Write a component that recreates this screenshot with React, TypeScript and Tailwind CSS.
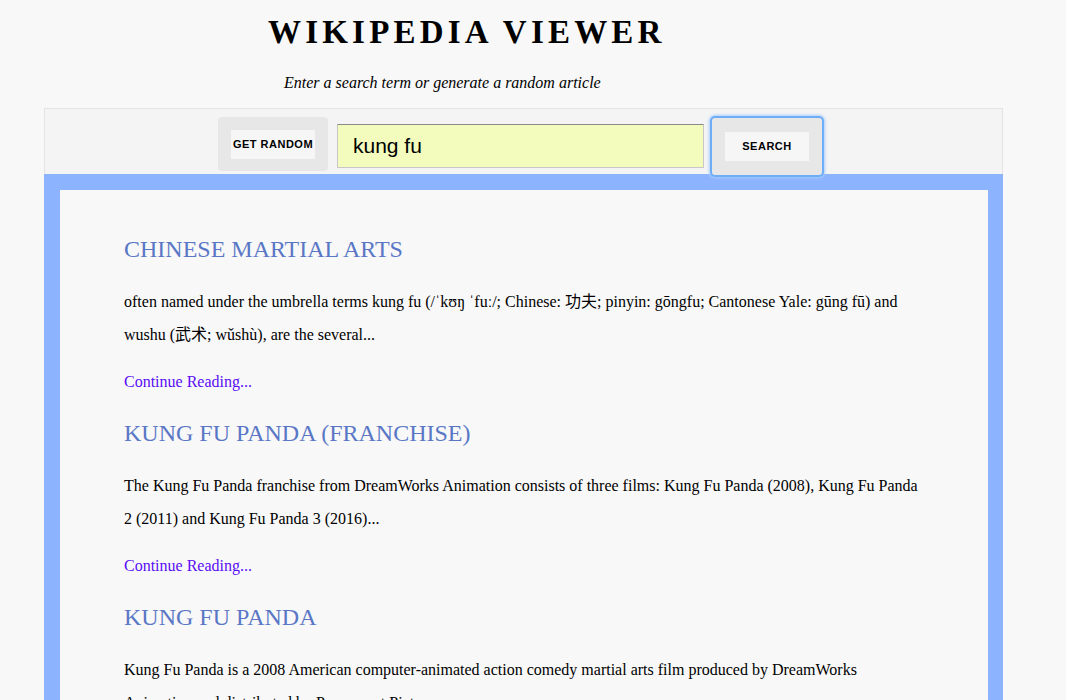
const results = [
  {
    title: "Chinese martial arts",
    extract: (
      <>
        often named under the umbrella terms kung fu (/ˈkʊŋ ˈfuː/; Chinese: 功夫; pinyin: gōngfu; Cantonese Yale: gūng fū) and
        wushu (武术; wǔshù), are the several...
      </>
    ),
  },
  {
    title: "Kung Fu Panda (franchise)",
    extract: (
      <>
        The Kung Fu Panda franchise from DreamWorks Animation consists of three films: Kung Fu Panda (2008), Kung Fu Panda 2 (2011) and Kung Fu Panda 3 (2016)...
      </>
    ),
  },
  {
    title: "Kung Fu Panda",
    extract: (
      <>
        Kung Fu Panda is a 2008 American computer-animated action comedy martial arts film produced by DreamWorks Animation and distributed by Paramount Pictures...
      </>
    ),
  },
];

function Result({ title, extract }: { title: string; extract: React.ReactNode }) {
  return (
    <article className="mb-[21px]">
      <h2 className="text-[24px] leading-[28px] uppercase text-[#5a77c6]">{title}</h2>
      <p className="mt-[22px] text-[16px] leading-[33px] text-black">{extract}</p>
      <p className="mt-[14px] text-[16px] leading-[33px]">
        <a href="#" className="text-[#5a0cf6]">
          Continue Reading...
        </a>
      </p>
    </article>
  );
}

export default function App() {
  return (
    <div
      className="min-h-[700px] bg-[#f8f8f8] text-black"
      style={{ fontFamily: '"Liberation Serif", "Noto Sans CJK SC", serif' }}
    >
      <header className="h-[108px] pt-[13px]">
        <h1 className="pl-[268px] text-[33px] leading-[38px] font-bold tracking-[4.2px]">WIKIPEDIA VIEWER</h1>
        <p className="mt-[22px] pl-[284px] text-[16px] italic leading-[20px]">
          Enter a search term or generate a random article
        </p>
      </header>

      <div className="ml-[44px] w-[959px]">
        <div className="flex h-[66px] justify-center border border-b-0 border-[#e4e4e4] bg-[#f4f4f4] pr-[7px] font-['Liberation_Sans',sans-serif]">
          <div className="mt-[8px] flex h-[54px] w-[110px] items-center justify-center rounded-[4px] bg-[#e7e7e7]">
            <button className="h-[29px] w-[84px] bg-[#f6f6f6] text-[11px] font-bold tracking-[0.5px] text-black">
              GET RANDOM
            </button>
          </div>
          <input
            defaultValue="kung fu"
            className="ml-[9px] mt-[15px] h-[44px] w-[367px] border border-[#c8c8c8] border-t-[#8a8a8a] bg-[#f4fcbd] pl-[15px] text-[21px] text-black outline-none"
          />
          <div className="ml-[8px] mt-[9px] flex h-[57px] w-[110px] items-center justify-center rounded-[3px] bg-[#e7e7e7] shadow-[0_0_0_2px_#6eaef9,0_0_3px_3px_#a9cdfb]">
            <button className="h-[29px] w-[84px] bg-[#f6f6f6] text-[11px] font-bold tracking-[0.5px] text-black">
              SEARCH
            </button>
          </div>
        </div>

        <div className="bg-[#8cb3fe] pb-[16px] pl-[16px] pr-[15px] pt-[16px]">
          <div className="bg-[#f8f8f8] px-[64px] pt-[45px] pb-[20px]">
            {results.map((r) => (
              <Result key={r.title} title={r.title} extract={r.extract} />
            ))}
          </div>
        </div>
      </div>
    </div>
  );
}
